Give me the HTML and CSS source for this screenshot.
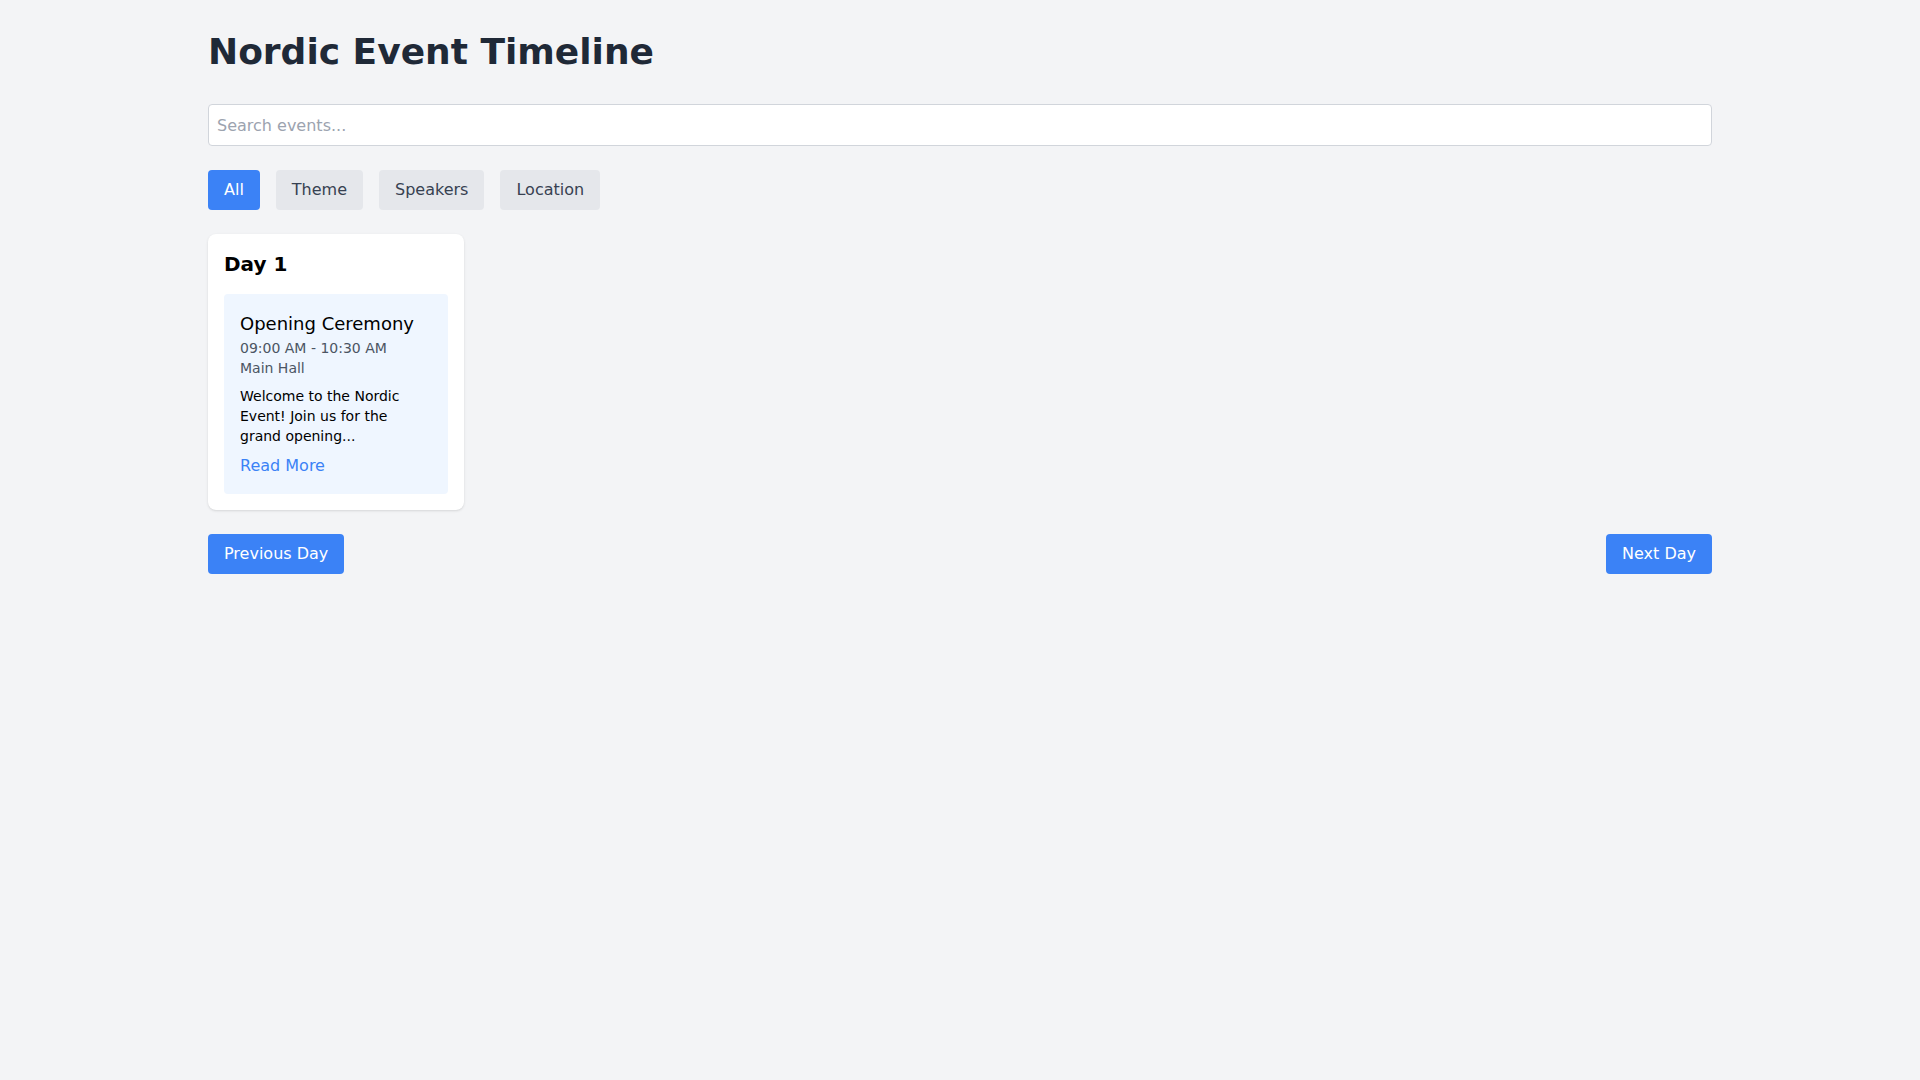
FILE: index.html
```html
<!DOCTYPE html>
<html lang="en">

<head>
  <meta charset="UTF-8">
  <meta name="viewport" content="width=device-width, initial-scale=1.0">
  <title>Nordic Event Timeline</title>
  <link rel="stylesheet" href="styles.css">
</head>

<body>
  <div class="container">
    <h1 class="title">Nordic Event Timeline</h1>

    <input class="search" type="text" placeholder="Search events...">

    <div class="filters">
      <button class="filter active">All</button>
      <button class="filter">Theme</button>
      <button class="filter">Speakers</button>
      <button class="filter">Location</button>
    </div>

    <div class="timeline">
      <div class="day">
        <h2 class="day-title">Day 1</h2>
        <div class="event">
          <h3 class="event-title">Opening Ceremony</h3>
          <p class="event-meta">09:00 AM - 10:30 AM</p>
          <p class="event-meta">Main Hall</p>
          <p class="event-desc">Welcome to the Nordic Event! Join us for the grand opening...</p>
          <a class="read-more" href="#">Read More</a>
        </div>
      </div>
    </div>

    <div class="pager">
      <button class="nav-btn">Previous Day</button>
      <button class="nav-btn">Next Day</button>
    </div>
  </div>
</body>

</html>
```

FILE: styles.css
```css
* {
  box-sizing: border-box;
}

body {
  margin: 0;
  background: #f3f4f6;
  font-family: "DejaVu Sans", sans-serif;
  font-size: 16px;
  line-height: 24px;
}

h1,
h2,
h3,
p {
  margin: 0;
}

button {
  font-family: inherit;
  font-size: 16px;
  line-height: 24px;
  border: 0;
  cursor: pointer;
}

.container {
  max-width: 1536px;
  margin: 0 auto;
  padding: 32px 16px;
}

.title {
  font-size: 36px;
  line-height: 40px;
  font-weight: bold;
  color: #1f2937;
  margin-bottom: 32px;
}

.search {
  display: block;
  width: 100%;
  height: 42px;
  padding: 8px;
  font-family: inherit;
  font-size: 16px;
  line-height: 24px;
  border: 1px solid #d1d5db;
  border-radius: 4px;
  background: white;
  margin-bottom: 24px;
}

.search::placeholder {
  color: #9ca3af;
}

.filters {
  display: flex;
  gap: 16px;
  margin-bottom: 24px;
}

.filter {
  padding: 8px 16px;
  border-radius: 4px;
  background: #e5e7eb;
  color: #374151;
}

.filter.active {
  background: #3b82f6;
  color: white;
}

.timeline {
  display: flex;
  gap: 16px;
}

.day {
  width: 256px;
  padding: 16px;
  background: white;
  border-radius: 8px;
  box-shadow: 0 1px 3px 0 rgba(0, 0, 0, 0.1), 0 1px 2px -1px rgba(0, 0, 0, 0.1);
}

.day-title {
  font-size: 20px;
  line-height: 28px;
  font-weight: bold;
  margin-bottom: 16px;
}

.event {
  padding: 16px;
  background: #eff6ff;
  border-radius: 4px;
}

.event-title {
  font-size: 18px;
  line-height: 28px;
  font-weight: normal;
}

.event-meta {
  font-size: 14px;
  line-height: 20px;
  color: #4b5563;
}

.event-desc {
  font-size: 14px;
  line-height: 20px;
  margin-top: 8px;
}

.read-more {
  display: inline-block;
  margin-top: 8px;
  color: #3b82f6;
  text-decoration: none;
}

.pager {
  display: flex;
  justify-content: space-between;
  margin-top: 24px;
}

.nav-btn {
  padding: 8px 16px;
  border-radius: 4px;
  background: #3b82f6;
  color: white;
}
```
